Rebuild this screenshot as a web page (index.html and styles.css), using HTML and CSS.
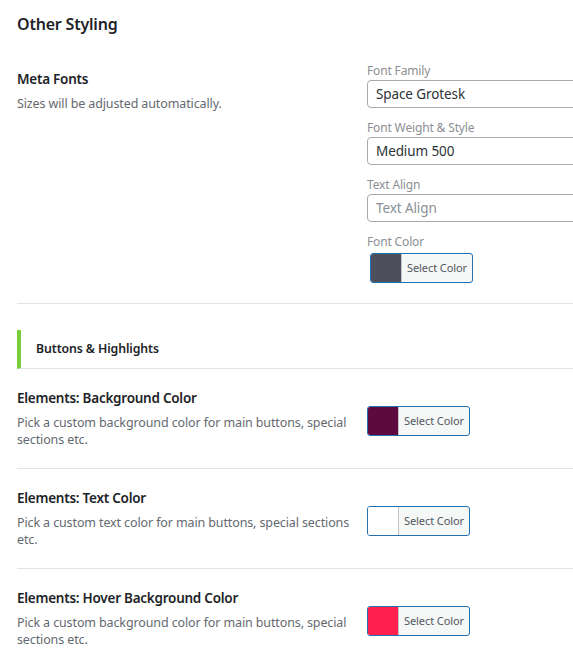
FILE: index.html
```html
<!DOCTYPE html>
<html>
<head>
<meta charset="utf-8">
<link rel="stylesheet" href="styles.css">
</head>
<body>
<div class="page">
  <h2 class="page-title">Other Styling</h2>

  <div class="row row-meta">
    <div class="row-info">
      <div class="row-title">Meta Fonts</div>
      <div class="row-desc">Sizes will be adjusted automatically.</div>
    </div>
    <div class="row-control">
      <div class="field">
        <div class="field-label">Font Family</div>
        <div class="input">Space Grotesk</div>
      </div>
      <div class="field">
        <div class="field-label">Font Weight &amp; Style</div>
        <div class="input">Medium 500</div>
      </div>
      <div class="field">
        <div class="field-label">Text Align</div>
        <div class="input placeholder">Text Align</div>
      </div>
      <div class="field field-color">
        <div class="field-label">Font Color</div>
        <button class="color-btn"><span class="swatch" style="background:#4d4f5d"></span><span class="color-text">Select Color</span></button>
      </div>
    </div>
  </div>

  <div class="section-head">Buttons &amp; Highlights</div>

  <div class="row">
    <div class="row-info">
      <div class="row-title">Elements: Background Color</div>
      <div class="row-desc">Pick a custom background color for main buttons, special sections etc.</div>
    </div>
    <div class="row-control center">
      <button class="color-btn"><span class="swatch" style="background:#5c0a3f"></span><span class="color-text">Select Color</span></button>
    </div>
  </div>

  <div class="row">
    <div class="row-info">
      <div class="row-title">Elements: Text Color</div>
      <div class="row-desc">Pick a custom text color for main buttons, special sections etc.</div>
    </div>
    <div class="row-control center">
      <button class="color-btn"><span class="swatch" style="background:#ffffff"></span><span class="color-text">Select Color</span></button>
    </div>
  </div>

  <div class="row">
    <div class="row-info">
      <div class="row-title">Elements: Hover Background Color</div>
      <div class="row-desc">Pick a custom background color for main buttons, special sections etc.</div>
    </div>
    <div class="row-control center">
      <button class="color-btn"><span class="swatch" style="background:#ff1f4f"></span><span class="color-text">Select Color</span></button>
    </div>
  </div>
</div>
</body>
</html>
```

FILE: styles.css
```css
html, body {
  margin: 0;
  padding: 0;
  background: #ffffff;
  overflow: hidden;
}
body {
  font-family: "Noto Sans", "Open Sans", sans-serif;
  color: #1d2327;
}
.page {
  width: 640px;
  padding: 0 0 0 17px;
}
.page-title {
  margin: 0;
  padding-top: 12px;
  font-size: 16px;
  letter-spacing: -0.2px;
  line-height: 24px;
  font-weight: 600;
  color: #1d2327;
}
.row {
  display: grid;
  grid-template-columns: 350px 1fr;
  padding: 19px 0 20px;
  border-bottom: 1px solid #e4e4e6;
}
.row:last-child {
  border-bottom: none;
}
.row-meta {
  padding-top: 27px;
  padding-bottom: 20px;
}
.row-meta .row-info {
  padding-top: 6px;
}
.row-title {
  font-size: 13.5px;
  letter-spacing: -0.25px;
  line-height: 20px;
  font-weight: 600;
  color: #1d2327;
}
.row-desc {
  margin-top: 6px;
  font-size: 12.5px;
  letter-spacing: -0.12px;
  line-height: 17px;
  color: #646970;
  padding-right: 8px;
}
.row-control {
  display: flex;
  flex-direction: column;
}
.row-control.center {
  justify-content: flex-start;
  padding-top: 18px;
}
.field {
  display: flex;
  flex-direction: column;
  margin-bottom: 12px;
}
.field-label {
  font-size: 12px;
  letter-spacing: -0.15px;
  line-height: 16px;
  color: #8c8f94;
  margin-bottom: 1px;
}
.input {
  box-sizing: border-box;
  height: 28px;
  width: 260px;
  border: 1px solid #a7aaad;
  border-radius: 4px;
  padding: 0 8px;
  font-size: 13.5px;
  letter-spacing: -0.1px;
  line-height: 26px;
  color: #2c3338;
}
.input.placeholder {
  color: #8c8f94;
}
.field-color {
  margin-bottom: 0;
}
.field-color .field-label {
  margin-bottom: 3px;
}
.field-color .color-btn {
  margin-left: 3px;
}
.color-btn {
  display: flex;
  align-items: stretch;
  box-sizing: border-box;
  width: 103px;
  height: 30px;
  padding: 0;
  border: 1px solid #2271b1;
  border-radius: 3px;
  background: #f6f7f7;
  overflow: hidden;
  font-family: inherit;
  cursor: pointer;
}
.swatch {
  width: 30px;
  border-right: 1px solid #c3c4c7;
}
.color-text {
  flex: 1;
  font-size: 11px;
  letter-spacing: -0.1px;
  line-height: 28px;
  color: #50575e;
  text-align: center;
}
.section-head {
  margin-top: 26px;
  box-sizing: border-box;
  height: 39px;
  border-left: 4px solid #7ad03a;
  border-bottom: 1px solid #e4e4e6;
  padding-left: 15px;
  font-size: 12.3px;
  letter-spacing: -0.1px;
  line-height: 38px;
  font-weight: 600;
  color: #1d2327;
}
```
